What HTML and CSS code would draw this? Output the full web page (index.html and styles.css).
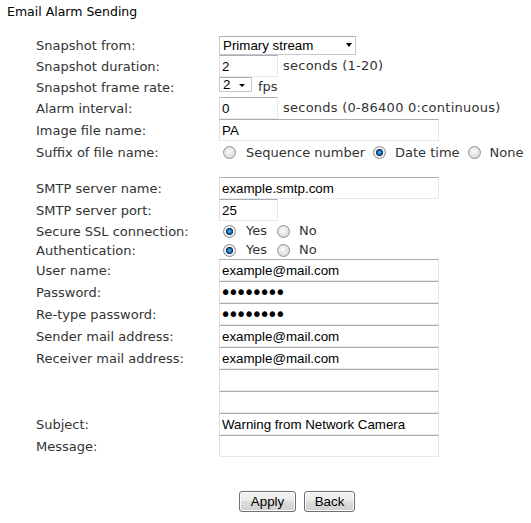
FILE: index.html
```html
<!DOCTYPE html>
<html lang="en">
<head>
<meta charset="utf-8">
<title>Email Alarm Sending</title>
<link rel="stylesheet" href="styles.css">
</head>
<body>
<div class="page">
  <h1 class="title">Email Alarm Sending</h1>
  <form class="form">
    <div class="row h20">
      <span class="label">Snapshot from:</span>
      <div class="val">
        <span class="sel sel-wide"><select><option>Primary stream</option><option>Secondary stream</option></select></span>
      </div>
    </div>
    <div class="row h22">
      <span class="label">Snapshot duration:</span>
      <div class="val"><input class="txt short" type="text" value="2"><span class="note">seconds (1-20)</span></div>
    </div>
    <div class="row h20">
      <span class="label">Snapshot frame rate:</span>
      <div class="val top">
        <span class="sel sel-small"><select><option>2</option><option>1</option></select></span><span class="note fps">fps</span>
      </div>
    </div>
    <div class="row h22">
      <span class="label">Alarm interval:</span>
      <div class="val"><input class="txt short" type="text" value="0"><span class="note">seconds (0-86400 0:continuous)</span></div>
    </div>
    <div class="row h22">
      <span class="label">Image file name:</span>
      <div class="val"><input class="txt long" type="text" value="PA"></div>
    </div>
    <div class="row h23">
      <span class="label">Suffix of file name:</span>
      <div class="val radios">
        <input class="radio" type="radio" name="suffix"><span class="opt">Sequence number</span>
        <input class="radio" type="radio" name="suffix" checked><span class="opt">Date time</span>
        <input class="radio" type="radio" name="suffix"><span class="opt">None</span>
      </div>
    </div>
    <div class="row h13"></div>
    <div class="row h22">
      <span class="label">SMTP server name:</span>
      <div class="val"><input class="txt long" type="text" value="example.smtp.com"></div>
    </div>
    <div class="row h22">
      <span class="label">SMTP server port:</span>
      <div class="val"><input class="txt short" type="text" value="25"></div>
    </div>
    <div class="row h20">
      <span class="label">Secure SSL connection:</span>
      <div class="val radios yn">
        <input class="radio" type="radio" name="ssl" checked><span class="opt">Yes</span>
        <input class="radio" type="radio" name="ssl"><span class="opt">No</span>
      </div>
    </div>
    <div class="row h18">
      <span class="label">Authentication:</span>
      <div class="val radios yn">
        <input class="radio" type="radio" name="auth" checked><span class="opt">Yes</span>
        <input class="radio" type="radio" name="auth"><span class="opt">No</span>
      </div>
    </div>
    <div class="row h22">
      <span class="label">User name:</span>
      <div class="val"><input class="txt long" type="text" value="example@mail.com"></div>
    </div>
    <div class="row h22">
      <span class="label">Password:</span>
      <div class="val"><input class="txt long pw" type="password" value="password"></div>
    </div>
    <div class="row h22">
      <span class="label">Re-type password:</span>
      <div class="val"><input class="txt long pw" type="password" value="password"></div>
    </div>
    <div class="row h22">
      <span class="label">Sender mail address:</span>
      <div class="val"><input class="txt long" type="text" value="example@mail.com"></div>
    </div>
    <div class="row h22">
      <span class="label">Receiver mail address:</span>
      <div class="val"><input class="txt long" type="text" value="example@mail.com"></div>
    </div>
    <div class="row h22">
      <span class="label"></span>
      <div class="val"><input class="txt long" type="text" value=""></div>
    </div>
    <div class="row h22">
      <span class="label"></span>
      <div class="val"><input class="txt long" type="text" value=""></div>
    </div>
    <div class="row h22">
      <span class="label">Subject:</span>
      <div class="val"><input class="txt long" type="text" value="Warning from Network Camera"></div>
    </div>
    <div class="row h22">
      <span class="label">Message:</span>
      <div class="val"><input class="txt long" type="text" value=""></div>
    </div>
    <div class="buttons">
      <button type="button" class="btn apply">Apply</button>
      <button type="button" class="btn back">Back</button>
    </div>
  </form>
</div>
</body>
</html>
```
FILE: styles.css
```css
html, body {
  margin: 0;
  padding: 0;
  background: #fff;
}
body {
  font-family: "DejaVu Sans", Verdana, sans-serif;
  font-size: 13px;
  color: #333;
}
.title {
  margin: 0;
  box-sizing: border-box;
  height: 35px;
  padding: 4px 0 0 7px;
  font-size: 12.5px;
  line-height: 16px;
  font-weight: normal;
  color: #000;
}
.form {
  margin: 0;
}
.row {
  display: flex;
  align-items: center;
  padding-left: 36px;
}
.h13 { height: 13px; }
.h18 { height: 18px; }
.h20 { height: 20px; }
.h22 { height: 22px; }
.h23 { height: 23px; }
.label {
  flex: none;
  width: 183px;
  line-height: 16px;
  padding-top: 1px;
  white-space: nowrap;
}
.val {
  display: flex;
  align-items: center;
  height: 100%;
}
.val.top {
  align-items: flex-start;
}
.note {
  margin-left: 5px;
  line-height: 16px;
  letter-spacing: 0.25px;
  white-space: nowrap;
}
.note.fps {
  margin-left: 6px;
  margin-top: 2px;
  letter-spacing: 0;
}
.txt {
  box-sizing: border-box;
  height: 22px;
  margin: 0;
  padding: 0 2px;
  font-family: "Liberation Sans", Arial, sans-serif;
  font-size: 13.33px;
  color: #000;
  background: #fff;
  border: 1px solid #e3e9ef;
  border-top-color: #abadb3;
  border-left-color: #dbdfe6;
  border-radius: 0;
  outline: none;
}
.txt.short { width: 59px; }
.txt.long { width: 220px; }
.txt.pw {
  font-family: "DejaVu Sans", sans-serif;
  font-size: 19px;
  letter-spacing: -3.4px;
  padding-left: 0;
}
.sel {
  position: relative;
  display: inline-block;
}
.sel select {
  appearance: none;
  -webkit-appearance: none;
  box-sizing: border-box;
  margin: 0;
  padding: 0 0 0 3px;
  font-family: "Liberation Sans", Arial, sans-serif;
  font-size: 13.33px;
  color: #000;
  background: #fff;
  border: 1px solid #c4c8ce;
  border-top-color: #a9adb4;
  border-radius: 0;
  outline: none;
}
.sel::after {
  content: "";
  position: absolute;
  top: 50%;
  right: 4px;
  margin-top: -2px;
  border-left: 3.5px solid transparent;
  border-right: 3.5px solid transparent;
  border-top: 4px solid #000;
  pointer-events: none;
}
.sel-wide select {
  width: 137px;
  height: 19px;
}
.sel-small select {
  width: 33px;
  height: 15px;
  line-height: 13px;
}
.sel-small::after {
  right: 7px;
  margin-top: -1px;
  border-left-width: 3px;
  border-right-width: 3px;
  border-top-width: 3px;
}
.radios {
  padding-left: 4px;
}
.radio {
  appearance: none;
  -webkit-appearance: none;
  box-sizing: border-box;
  flex: none;
  width: 13px;
  height: 13px;
  margin: 0;
  border-radius: 50%;
  border: 1px solid #8d8f91;
  background: radial-gradient(circle at 45% 40%, #fbfbfb 0, #e6e6e6 45%, #cfcfcf 100%);
}
.radio:checked {
  background: radial-gradient(circle at 50% 50%, #63c0f0 0, #1f7cc2 1.6px, #0c4f8e 2.6px, #1b2f52 3.3px, #f8f8f8 3.9px, #ececec 5px, #d4d4d4 5.5px);
}
.opt {
  margin-left: 9px;
  margin-right: 8px;
  line-height: 16px;
  white-space: nowrap;
}
.radios .radio:first-child + .opt {
  margin-left: 10px;
}
.yn .opt {
  margin-right: 10px;
}
.buttons {
  display: flex;
  gap: 8px;
  padding-left: 239px;
  margin-top: 34px;
}
.btn {
  box-sizing: border-box;
  height: 21px;
  margin: 0;
  padding: 0;
  font-family: "Liberation Sans", Arial, sans-serif;
  font-size: 13.33px;
  color: #000;
  border: 1px solid #707070;
  border-radius: 3px;
  background: linear-gradient(#f2f2f2, #ebebeb 50%, #dddddd 50%, #cfcfcf);
  box-shadow: inset 0 0 0 1px #fbfbfb;
}
.btn.apply { width: 57px; }
.btn.back { width: 51px; }
```
